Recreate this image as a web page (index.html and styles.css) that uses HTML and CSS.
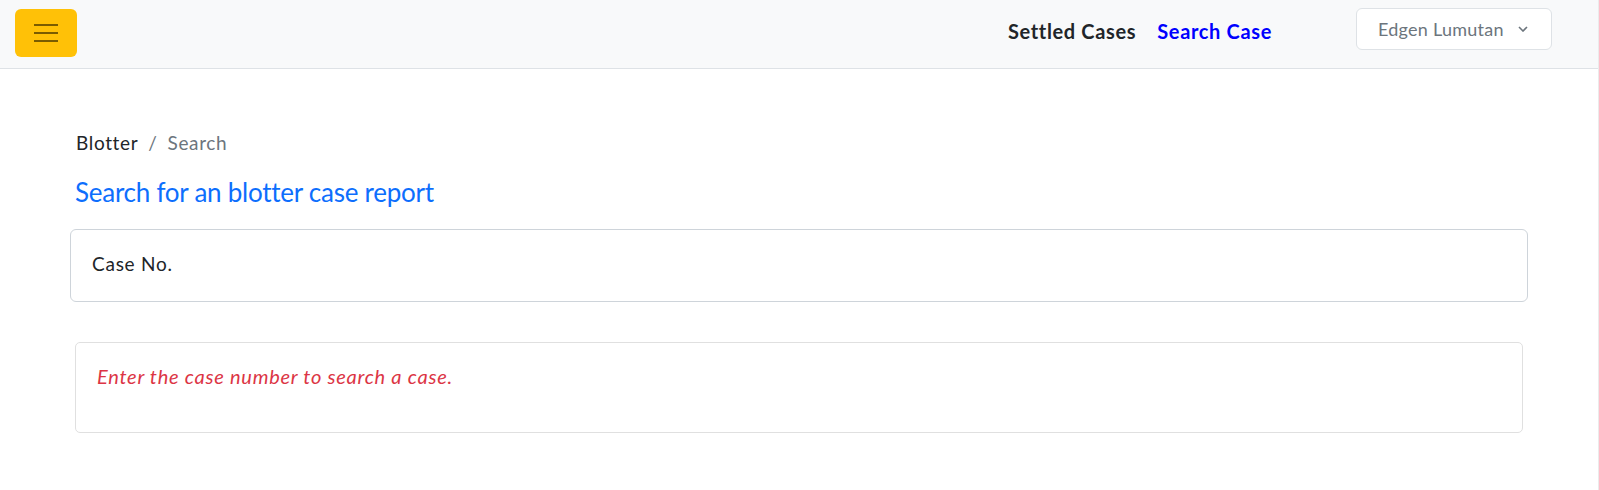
FILE: index.html
```html
<!DOCTYPE html>
<html lang="en">
<head>
<meta charset="utf-8">
<title>Blotter Search</title>
<link rel="stylesheet" href="styles.css">
</head>
<body>
<div class="page">
  <header class="navbar">
    <button class="toggler" type="button" aria-label="Toggle menu">
      <svg width="24" height="18" viewBox="0 0 24 18" aria-hidden="true">
        <path d="M0 1h24M0 9h24M0 17h24" stroke="#7a5c00" stroke-width="2" fill="none"/>
      </svg>
    </button>
    <nav class="nav">
      <a class="nav-link" href="#">Settled Cases</a>
      <a class="nav-link active" href="#">Search Case</a>
    </nav>
    <button class="user-btn" type="button">
      <span>Edgen Lumutan</span>
      <svg width="10" height="6" viewBox="0 0 10 6" aria-hidden="true">
        <path d="M1 1l4 4 4-4" stroke="#6c757d" stroke-width="1.6" fill="none"/>
      </svg>
    </button>
  </header>
  <main class="content">
    <ol class="breadcrumb">
      <li class="crumb">Blotter</li>
      <li class="sep">/</li>
      <li class="crumb current">Search</li>
    </ol>
    <h4 class="title">Search for an blotter case report</h4>
    <div class="field"><span class="field-label">Case No.</span></div>
    <div class="result">
      <p class="result-text">Enter the case number to search a case.</p>
    </div>
  </main>
</div>
</body>
</html>
```
FILE: styles.css
```css
* { box-sizing: border-box; }
html, body { margin: 0; padding: 0; background: #fff; }
body { font-family: "Lato", "Noto Sans", sans-serif; color: #212529; }

.page {
  width: 1599px;
  min-height: 490px;
  border-right: 1px solid #ebebeb;
}

.navbar {
  display: flex;
  align-items: center;
  height: 69px;
  padding: 0 46px 1px 15px;
  background: #f8f9fa;
  border-bottom: 1px solid #dee2e6;
}

.toggler {
  width: 62px;
  height: 48px;
  margin-top: -1px;
  background: #ffc107;
  border: none;
  border-radius: 6px;
  display: flex;
  align-items: center;
  justify-content: center;
  padding: 0;
}

.nav {
  margin-left: auto;
  display: flex;
  gap: 21px;
  margin-right: 84px;
  margin-top: -5px;
}
.nav-link {
  font-size: 20px;
  font-weight: 700;
  letter-spacing: 0.65px;
  color: #212529;
  text-decoration: none;
}
.nav-link.active { color: #0000ff; }

.user-btn {
  width: 196px;
  height: 42px;
  margin-top: -10px;
  display: flex;
  align-items: center;
  justify-content: space-between;
  padding: 0 23px 0 21px;
  background: #fff;
  border: 1px solid #dee2e6;
  border-radius: 6px;
  font-family: inherit;
  font-size: 18px;
  letter-spacing: 0.25px;
  color: #6c757d;
}

.content {
  padding: 60px 70px 0 70px;
}

.breadcrumb {
  list-style: none;
  margin: 0 0 21px 6px;
  padding: 0;
  display: flex;
  gap: 10px;
  font-size: 19px;
  letter-spacing: 0.65px;
  line-height: 27px;
}
.crumb { color: #212529; }
.sep, .current { color: #6c757d; }

.title {
  margin: 0 0 21px 5px;
  font-size: 26px;
  font-weight: 400;
  letter-spacing: -0.25px;
  line-height: 31px;
  color: #0d6efd;
}

.field {
  width: 1458px;
  height: 73px;
  border: 1px solid #ced4da;
  border-radius: 6px;
  display: flex;
  align-items: center;
  padding: 0 21px;
}
.field-label {
  font-size: 19px;
  letter-spacing: 0.75px;
  color: #212529;
  margin-top: -4px;
}

.result {
  width: 1448px;
  height: 91px;
  margin: 40px 0 0 5px;
  border: 1px solid #e0e0e0;
  border-radius: 5px;
  padding: 20px 21px;
}
.result-text {
  margin: 0;
  font-size: 20px;
  line-height: 27px;
  letter-spacing: 0.75px;
  font-style: italic;
  color: #dc3545;
}
```
